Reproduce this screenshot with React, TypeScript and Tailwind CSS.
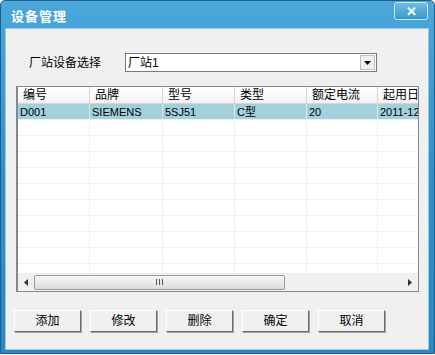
import React from "react";

const cols = [
  { name: "编号", w: 72 },
  { name: "品牌", w: 73 },
  { name: "型号", w: 72 },
  { name: "类型", w: 72 },
  { name: "额定电流", w: 71 },
  { name: "起用日期", w: 60 },
];

const row = ["D001", "SIEMENS", "5SJ51", "C型", "20", "2011-12-01"];

export default function App() {
  const font = { fontFamily: '"Liberation Sans", "Noto Sans CJK SC", sans-serif' };
  return (
    <div className="w-[435px] h-[355px] bg-white" style={font}>
      <div className="w-[435px] h-[354px] rounded-t-[5px] bg-gradient-to-b from-[#4ba7da] via-[#2f90cb] to-[#2a89c3] flex flex-col pl-[4px] pr-[5px] pb-[3px] border border-[#1b5f8a]">
        <div className="h-[27px] flex items-start justify-between">
          <div className="text-white text-[13px] font-bold pl-[6px] pt-[6px] tracking-[1px]">设备管理</div>
          <div className="mt-[1px] mr-[1px] w-[34px] h-[18px] rounded-[3px] border border-[#c9e6f6] bg-gradient-to-b from-[#6fbbe5] to-[#3897cf] flex items-center justify-center text-white text-[13px] font-bold leading-none">
            ✕
          </div>
        </div>
        <div className="flex-1 bg-[#f0f0f0] border border-[#9fc6de] flex flex-col text-[12px] text-black">
          <div className="flex items-center mt-[24px] h-[19px]">
            <div className="ml-[23px] w-[96px]">厂站设备选择</div>
            <div className="w-[252px] h-[19px] bg-white border border-[#7a7a7a] flex items-center justify-between">
              <span className="pl-[2px]">厂站1</span>
              <div className="w-[15px] h-[15px] mr-[1px] border border-[#c0c0c0] bg-[#f0f0f0] flex items-center justify-center">
                <svg width="7" height="4" viewBox="0 0 7 4"><path d="M0 0h7L3.5 4z" fill="#000" /></svg>
              </div>
            </div>
          </div>
          <div className="mt-[14px] ml-[10px] w-[403px] h-[206px] border border-[#828790] bg-white flex flex-col overflow-hidden">
            <div className="flex-1 overflow-hidden border-l-[1px] border-[#888]">
              <div className="flex h-[17px] border-b border-[#d5d5d5] bg-gradient-to-b from-white to-[#f3f3f3]">
                {cols.map((c, i) => (
                  <div key={i} className="shrink-0 border-r border-[#d5d5d5] pl-[5px] leading-[16px] overflow-hidden whitespace-nowrap" style={{ width: c.w }}>
                    {c.name}
                  </div>
                ))}
              </div>
              <div className="flex h-[16px] bg-[#a2d0dc] border-b border-[#f0f0f0]">
                {row.map((v, i) => (
                  <div key={i} className="shrink-0 border-r border-[#e6e6e6] pl-[2px] leading-[16px] overflow-hidden whitespace-nowrap text-[11px]" style={{ width: cols[i].w }}>
                    {v}
                  </div>
                ))}
              </div>
              {Array.from({ length: 10 }).map((_, r) => (
                <div key={r} className="flex h-[16px] border-b border-[#f0f0f0]">
                  {cols.map((c, i) => (
                    <div key={i} className="shrink-0 border-r border-[#f0f0f0]" style={{ width: c.w }} />
                  ))}
                </div>
              ))}
            </div>
            <div className="h-[18px] bg-[#f0f0f0] flex items-center border-l border-[#888]">
              <div className="w-[16px] h-[16px] flex items-center justify-center">
                <svg width="4" height="7" viewBox="0 0 4 7"><path d="M4 0v7L0 3.5z" fill="#333" /></svg>
              </div>
              <div className="w-[251px] h-[15px] rounded-[2px] border border-[#9a9a9a] bg-gradient-to-b from-[#f8f8f8] to-[#dcdcdc] flex items-center justify-center">
                <svg width="7" height="6" viewBox="0 0 7 6"><path d="M0.5 0v6M3.5 0v6M6.5 0v6" stroke="#555" /></svg>
              </div>
              <div className="flex-1" />
              <div className="w-[16px] h-[16px] flex items-center justify-center">
                <svg width="4" height="7" viewBox="0 0 4 7"><path d="M0 0v7L4 3.5z" fill="#333" /></svg>
              </div>
            </div>
          </div>
          <div className="flex mt-[18px] ml-[8px] gap-[9px]">
            {["添加", "修改", "删除", "确定", "取消"].map((b) => (
              <div key={b} className="w-[67px] h-[22px] bg-[#f0f0f0] border border-t-white border-l-white border-r-[#6d6d6d] border-b-[#6d6d6d] shadow-[1px_1px_0_#a0a0a0] flex items-center justify-center">
                {b}
              </div>
            ))}
          </div>
        </div>
      </div>
    </div>
  );
}
